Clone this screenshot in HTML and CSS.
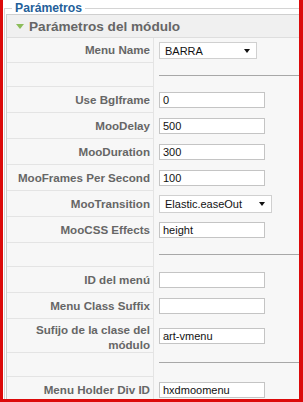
FILE: index.html
```html
<!DOCTYPE html>
<html lang="es">
<head>
<meta charset="utf-8">
<title>Parámetros</title>
<link rel="stylesheet" href="styles.css">
</head>
<body>
<div class="frame">
  <fieldset class="params">
    <legend class="params-legend">Parámetros</legend>
    <div class="panel">
      <h3 class="panel-title"><span class="arrow"></span>Parámetros del módulo</h3>
      <table class="paramlist">
        <colgroup><col class="col-key"><col class="col-val"></colgroup>
        <tr class="row-sel">
          <td class="key">Menu Name</td>
          <td class="val"><div class="select select-short"><span>BARRA</span><span class="caret"></span></div></td>
        </tr>
        <tr class="row-sep row-sep-first"><td class="key"></td><td class="val"><hr class="rule"></td></tr>
        <tr><td class="key">Use BgIframe</td><td class="val"><div class="field">0</div></td></tr>
        <tr><td class="key">MooDelay</td><td class="val"><div class="field">500</div></td></tr>
        <tr><td class="key">MooDuration</td><td class="val"><div class="field">300</div></td></tr>
        <tr><td class="key">MooFrames Per Second</td><td class="val"><div class="field">100</div></td></tr>
        <tr class="row-sel2">
          <td class="key">MooTransition</td>
          <td class="val"><div class="select select-long"><span>Elastic.easeOut</span><span class="caret"></span></div></td>
        </tr>
        <tr><td class="key">MooCSS Effects</td><td class="val"><div class="field">height</div></td></tr>
        <tr class="row-sep"><td class="key"></td><td class="val"><hr class="rule"></td></tr>
        <tr><td class="key">ID del menú</td><td class="val"><div class="field"></div></td></tr>
        <tr><td class="key">Menu Class Suffix</td><td class="val"><div class="field"></div></td></tr>
        <tr class="row-tall"><td class="key">Sufijo de la clase del módulo</td><td class="val"><div class="field">art-vmenu</div></td></tr>
        <tr class="row-sep row-sep-last"><td class="key"></td><td class="val"><hr class="rule"></td></tr>
        <tr><td class="key">Menu Holder Div ID</td><td class="val"><div class="field">hxdmoomenu</div></td></tr>
      </table>
    </div>
  </fieldset>
</div>
</body>
</html>
```

FILE: styles.css
```css
html, body {
  margin: 0;
  padding: 0;
  background: #ffffff;
}

.frame {
  box-sizing: border-box;
  width: 303px;
  height: 402px;
  border-left: 3px solid #dc0a0a;
  border-right: 4px solid #dc0a0a;
  border-bottom: 3px solid #dc0a0a;
  overflow: hidden;
  background: #ffffff;
  font-family: "Liberation Sans", Arial, sans-serif;
}

.params {
  margin: 0 0 0 1px;
  padding: 0 0 0 1px;
  width: 330px;
  border: 1px solid #d4d4d4;
  border-right: none;
  border-bottom: none;
  min-inline-size: 0;
}

.params-legend {
  margin-left: 6px;
  padding: 0 3px;
  font-size: 12.2px;
  font-weight: bold;
  line-height: 16px;
  color: #245f9a;
}

.panel {
  margin-top: -2px;
  border: 1px solid #cfcfcf;
  border-right: none;
  background: #f7f7f7;
}

.panel-title {
  display: flex;
  align-items: center;
  margin: 0;
  height: 22px;
  padding-left: 9px;
  background: #f0f0f0;
  border-bottom: 1px solid #dedede;
  font-size: 13.6px;
  font-weight: bold;
  color: #666666;
}

.arrow {
  width: 0;
  height: 0;
  margin-right: 5px;
  margin-top: 1px;
  border-left: 4px solid transparent;
  border-right: 4px solid transparent;
  border-top: 5px solid #8cbd5a;
}

.paramlist {
  border-collapse: separate;
  border-spacing: 0;
  table-layout: fixed;
  width: 100%;
}

.col-key { width: 147px; }

.key {
  padding: 5px 3px 4px 3px;
  text-align: right;
  vertical-align: middle;
  font-size: 11.6px;
  font-weight: bold;
  line-height: 16px;
  color: #666666;
  border-bottom: 1px solid #e4e4e4;
  border-right: 1px solid #e4e4e4;
}

.val {
  padding: 5px 0 5px 5px;
  vertical-align: middle;
}

.row-sel .key {
  padding-top: 4px;
  padding-bottom: 4px;
}

.row-sel .val {
  padding-top: 4px;
  padding-bottom: 4px;
}

.row-sel2 .val {
  padding-top: 4px;
  padding-bottom: 4px;
}

.row-sep .key {
  padding: 0;
}

.row-sep .val {
  padding: 11px 0 12px 5px;
}

.row-sep-first .val {
  padding: 12px 0 11px 5px;
}

.row-sep-last .val {
  padding: 9px 0 14px 5px;
}

.row-tall .key {
  padding-top: 3px;
  padding-bottom: 0;
  line-height: 15px;
}

.row-tall .val {
  padding-top: 9px;
  padding-bottom: 9px;
}

.rule {
  margin: 0;
  height: 0;
  border: none;
  border-top: 1px solid #a8a8a8;
}

.field {
  box-sizing: border-box;
  width: 106px;
  height: 16px;
  padding-left: 3px;
  background: #ffffff;
  border: 1px solid #c4c4c4;
  font-size: 11px;
  line-height: 14px;
  color: #111111;
}

.select {
  box-sizing: border-box;
  display: flex;
  align-items: center;
  justify-content: space-between;
  height: 17px;
  padding: 0 6px 0 5px;
  background: #ffffff;
  border: 1px solid #d0d0d0;
  font-size: 11px;
  color: #111111;
}

.select-short { width: 98px; }
.select-long { width: 113px; height: 18px; }

.caret {
  width: 0;
  height: 0;
  border-left: 3.5px solid transparent;
  border-right: 3.5px solid transparent;
  border-top: 4px solid #111111;
}
```
